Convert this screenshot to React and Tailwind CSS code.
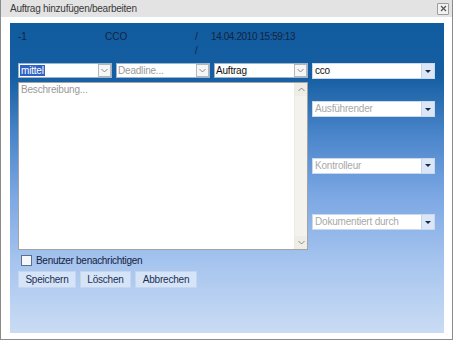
import React from 'react';

const font = { fontFamily: '"Liberation Sans", Arial, sans-serif' };

const Chevron = ({ up }) => (
    <svg width="7" height="5" viewBox="0 0 7 5" className={up ? 'rotate-180' : ''}>
        <path d="M0.5 1 L3.5 4 L6.5 1" fill="none" stroke="#8a8a8a" strokeWidth="1" />
    </svg>
);

const Select = ({ value, placeholder, selected }) => (
    <div className="flex-1 h-[15px] flex items-center bg-white border border-[#9fb3cc]">
        <div className="flex-1 pl-[1px] leading-[13px] truncate tracking-[-0.2px]">
            {selected ? (
                <span className="bg-[#2f62c4] text-white px-[1px]">{value}</span>
            ) : (
                <span className={placeholder ? 'text-[#9a9a9a]' : 'text-[#111]'}>{value}</span>
            )}
        </div>
        <div className="w-[13px] h-[13px] flex items-center justify-center bg-[#f6f6f6] border border-[#b7b7b7]">
            <Chevron />
        </div>
    </div>
);

const Combo = ({ value, muted }) => (
    <div className="h-[16px] flex items-center bg-white border border-[#c9d8ec]">
        <div className={`flex-1 pl-[2px] leading-[14px] tracking-[-0.2px] ${muted ? 'text-[#a9a9a9]' : 'text-[#111]'}`}>{value}</div>
        <div className="w-[13px] h-[14px] flex items-center justify-center bg-[#dbe6f6] border-l border-[#c2d3ec]">
            <div className="w-0 h-0 border-l-[3px] border-r-[3px] border-t-[3px] border-l-transparent border-r-transparent border-t-[#1a2a44]" />
        </div>
    </div>
);

const Button = ({ children, w }) => (
    <button className={`${w} h-[17px] bg-[#d6e4f8] border border-[#c5d6ee] text-[#1a2f55] leading-[15px] tracking-[-0.2px]`}>
        {children}
    </button>
);

export default function App() {
    return (
        <div style={font} className="w-[453px] h-[340px] flex flex-col bg-white border-x border-b border-[#8b8b8b] text-[10px]">
            {/* Title bar */}
            <div className="h-[17px] flex items-center justify-between bg-[#e3e3e3] pl-[9px] pr-[3px] text-[#3a3a3a]">
                <span className="text-[10px] tracking-[-0.25px]">Auftrag hinzufügen/bearbeiten</span>
                <div className="w-[12px] h-[12px] flex items-center justify-center border border-[#9c9c9c] bg-[#f2f2f2] rounded-[1px]">
                    <svg width="7" height="7" viewBox="0 0 7 7">
                        <path d="M1 1 L6 6 M6 1 L1 6" stroke="#555" strokeWidth="1.2" />
                    </svg>
                </div>
            </div>

            <div className="flex-1 pt-[6px] pl-[9px] pr-[8px] pb-[6px]">
                <div className="h-full flex flex-col pl-[8px] pr-[8px] pt-[7px] bg-[linear-gradient(to_bottom,#115c9f_0%,#145ea1_17%,#4a85ca_36%,#7aa6e3_55%,#a4c3ee_76%,#cadcf4_100%)]">
                    {/* Header info */}
                    <div className="grid grid-cols-[87px_90px_16px_1fr] text-[#14233f] leading-[14px] text-[10px]">
                        <span>-1</span>
                        <span>CCO</span>
                        <span>/</span>
                        <span className="tracking-[-0.4px]">14.04.2010 15:59:13</span>
                        <span />
                        <span />
                        <span>/</span>
                        <span />
                    </div>

                    {/* Select row */}
                    <div className="flex gap-[4px] mt-[5px]">
                        <div className="w-[290px] flex gap-[4px]">
                            <Select value="mittel" selected />
                            <Select value="Deadline..." placeholder />
                            <Select value="Auftrag" />
                        </div>
                        <div className="w-[123px]">
                            <Combo value="cco" />
                        </div>
                    </div>

                    {/* Description + right column */}
                    <div className="flex gap-[4px] mt-[3px]">
                        <div className="w-[290px] h-[168px] flex bg-white border border-[#a3a3a3]">
                            <div className="flex-1 pl-[2px] pt-[1px] text-[#9a9a9a] leading-[12px] tracking-[-0.2px]">Beschreibung...</div>
                            <div className="w-[13px] flex flex-col justify-between bg-[#f3f2ec] border-l border-[#ebeae3]">
                                <div className="h-[13px] flex items-center justify-center bg-[#eeede6]"><Chevron up /></div>
                                <div className="h-[13px] flex items-center justify-center bg-[#eeede6]"><Chevron /></div>
                            </div>
                        </div>
                        <div className="w-[123px] flex flex-col pt-[19px] gap-[40.5px]">
                            <Combo value="Ausführender" muted />
                            <Combo value="Kontrolleur" muted />
                            <Combo value="Dokumentiert durch" muted />
                        </div>
                    </div>

                    {/* Notify */}
                    <div className="h-[11px] flex items-center gap-[4px] mt-[5px] pl-[3px] text-[#14233f]">
                        <div className="w-[11px] h-[11px] bg-[#f4f7fc] border border-[#5c6f8c]" />
                        <span className="text-[10px] tracking-[-0.3px] leading-[11px]">Benutzer benachrichtigen</span>
                    </div>

                    {/* Buttons */}
                    <div className="flex gap-[4px] mt-[5px]">
                        <Button w="w-[58px]">Speichern</Button>
                        <Button w="w-[51px]">Löschen</Button>
                        <Button w="w-[62px]">Abbrechen</Button>
                    </div>
                </div>
            </div>
        </div>
    );
}
